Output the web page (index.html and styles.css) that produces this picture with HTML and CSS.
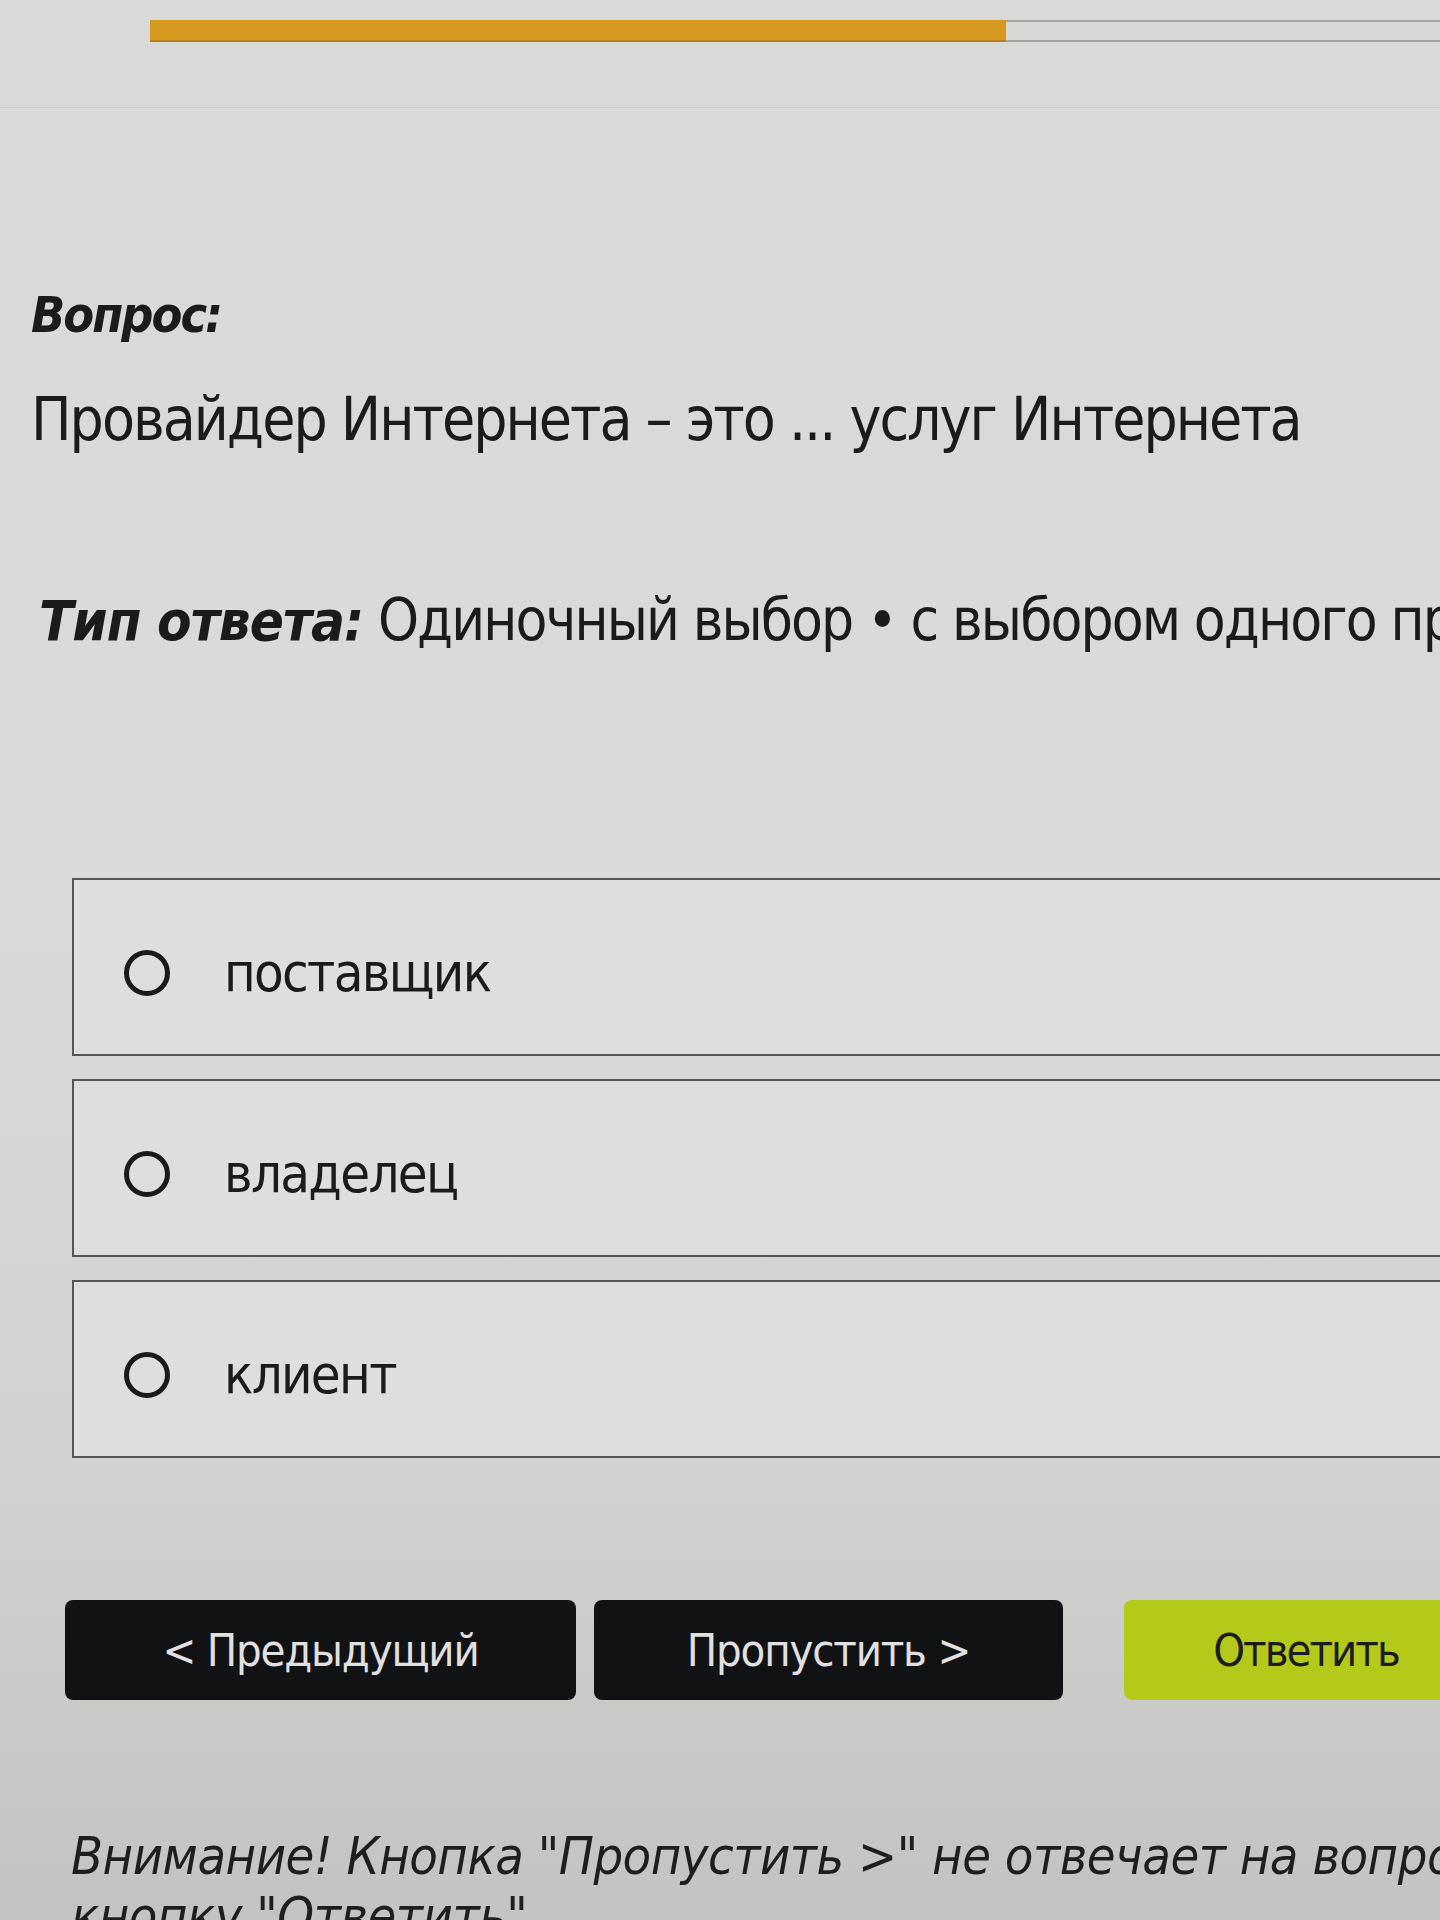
FILE: index.html
```html
<!DOCTYPE html>
<html lang="ru">
<head>
<meta charset="utf-8">
<title>Тест</title>
<link rel="stylesheet" href="styles.css">
</head>
<body>
<div class="page">
  <header class="top">
    <div class="progress">
      <div class="progress-fill" style="width: 856px"></div>
    </div>
  </header>

  <section class="question">
    <div class="label">Вопрос:</div>
    <div class="question-text">Провайдер Интернета – это ... услуг Интернета</div>
    <div class="answer-type"><span class="label-inline">Тип ответа:</span> Одиночный выбор • с выбором одного правильного ответа из нескольких предложенных вариантов</div>
  </section>

  <ul class="options">
    <li class="option"><span class="radio"></span><span class="option-text">поставщик</span></li>
    <li class="option"><span class="radio"></span><span class="option-text">владелец</span></li>
    <li class="option"><span class="radio"></span><span class="option-text">клиент</span></li>
  </ul>

  <div class="actions">
    <button class="btn btn-dark btn-prev">&lt; Предыдущий</button>
    <button class="btn btn-dark btn-skip">Пропустить &gt;</button>
    <button class="btn btn-answer">Ответить</button>
  </div>

  <p class="warning">Внимание! Кнопка "Пропустить &gt;" не отвечает на вопрос! Для ответа нажмите<br>кнопку "Ответить".</p>
</div>
</body>
</html>
```

FILE: styles.css
```css
html, body {
  margin: 0;
  padding: 0;
}

body {
  width: 1440px;
  height: 1920px;
  overflow: hidden;
  background: linear-gradient(180deg, #d9d9d7 0%, #dadad8 45%, #d2d2d0 75%, #c3c3c1 100%);
  font-family: "DejaVu Sans Condensed", "DejaVu Sans", sans-serif;
  font-stretch: condensed;
  color: #1b1b1b;
}

.page {
  width: 1440px;
  overflow: hidden;
}

.top {
  height: 108px;
  padding-top: 20px;
  box-sizing: border-box;
  border-bottom: 1px solid #cdcdcb;
}

.progress {
  margin-left: 150px;
  margin-right: -40px;
  height: 22px;
  border: 2px solid #a3a3a1;
  border-left: none;
  box-sizing: border-box;
  background: #d8d8d6;
}

.progress-fill {
  height: 22px;
  margin-top: -2px;
  background: #d6991f;
  border-bottom: 2px solid #b88218;
  box-sizing: border-box;
}

.question {
  padding-left: 31px;
  padding-top: 171px;
}

.label {
  font-size: 50px;
  line-height: 72px;
  font-weight: bold;
  font-style: italic;
  letter-spacing: -2px;
}

.question-text {
  margin-top: 28px;
  font-size: 60px;
  line-height: 80px;
  letter-spacing: -2px;
  white-space: nowrap;
}

.answer-type {
  margin-top: 121px;
  padding-left: 8px;
  font-size: 58px;
  line-height: 80px;
  letter-spacing: -1.9px;
  white-space: nowrap;
}

.label-inline {
  font-size: 56px;
  font-weight: bold;
  font-style: italic;
  letter-spacing: -1px;
}

.options {
  list-style: none;
  margin: 217px -60px 0 72px;
  padding: 0;
  display: flex;
  flex-direction: column;
  gap: 23px;
}

.option {
  height: 178px;
  box-sizing: border-box;
  border: 2px solid #565654;
  background: #dededc;
  display: flex;
  align-items: center;
  padding: 12px 0 0 50px;
}

.radio {
  width: 46px;
  height: 46px;
  box-sizing: border-box;
  border: 5px solid #1a1a1a;
  border-radius: 50%;
  flex: none;
  margin-right: 54px;
}

.option-text {
  font-size: 54px;
  line-height: 80px;
  letter-spacing: -1.7px;
}

.actions {
  margin-top: 142px;
  padding-left: 65px;
  display: flex;
  align-items: flex-start;
  height: 100px;
}

.btn {
  height: 100px;
  border: none;
  border-radius: 8px;
  font-family: inherit;
  font-stretch: condensed;
  font-size: 45px;
  letter-spacing: -1.2px;
  padding: 0;
  flex: none;
}

.btn-dark {
  background: #111214;
  color: #e0e0e0;
}

.btn-prev {
  width: 511px;
}

.btn-skip {
  width: 469px;
  margin-left: 18px;
}

.btn-answer {
  width: 364px;
  margin-left: 61px;
  background: #b5c91b;
  color: #1c1c1c;
  letter-spacing: -2px;
}

.warning {
  margin: 126px 0 0 71px;
  font-size: 52px;
  line-height: 60px;
  font-style: italic;
  letter-spacing: -0.5px;
  white-space: nowrap;
  color: #1e1e1e;
}
```
